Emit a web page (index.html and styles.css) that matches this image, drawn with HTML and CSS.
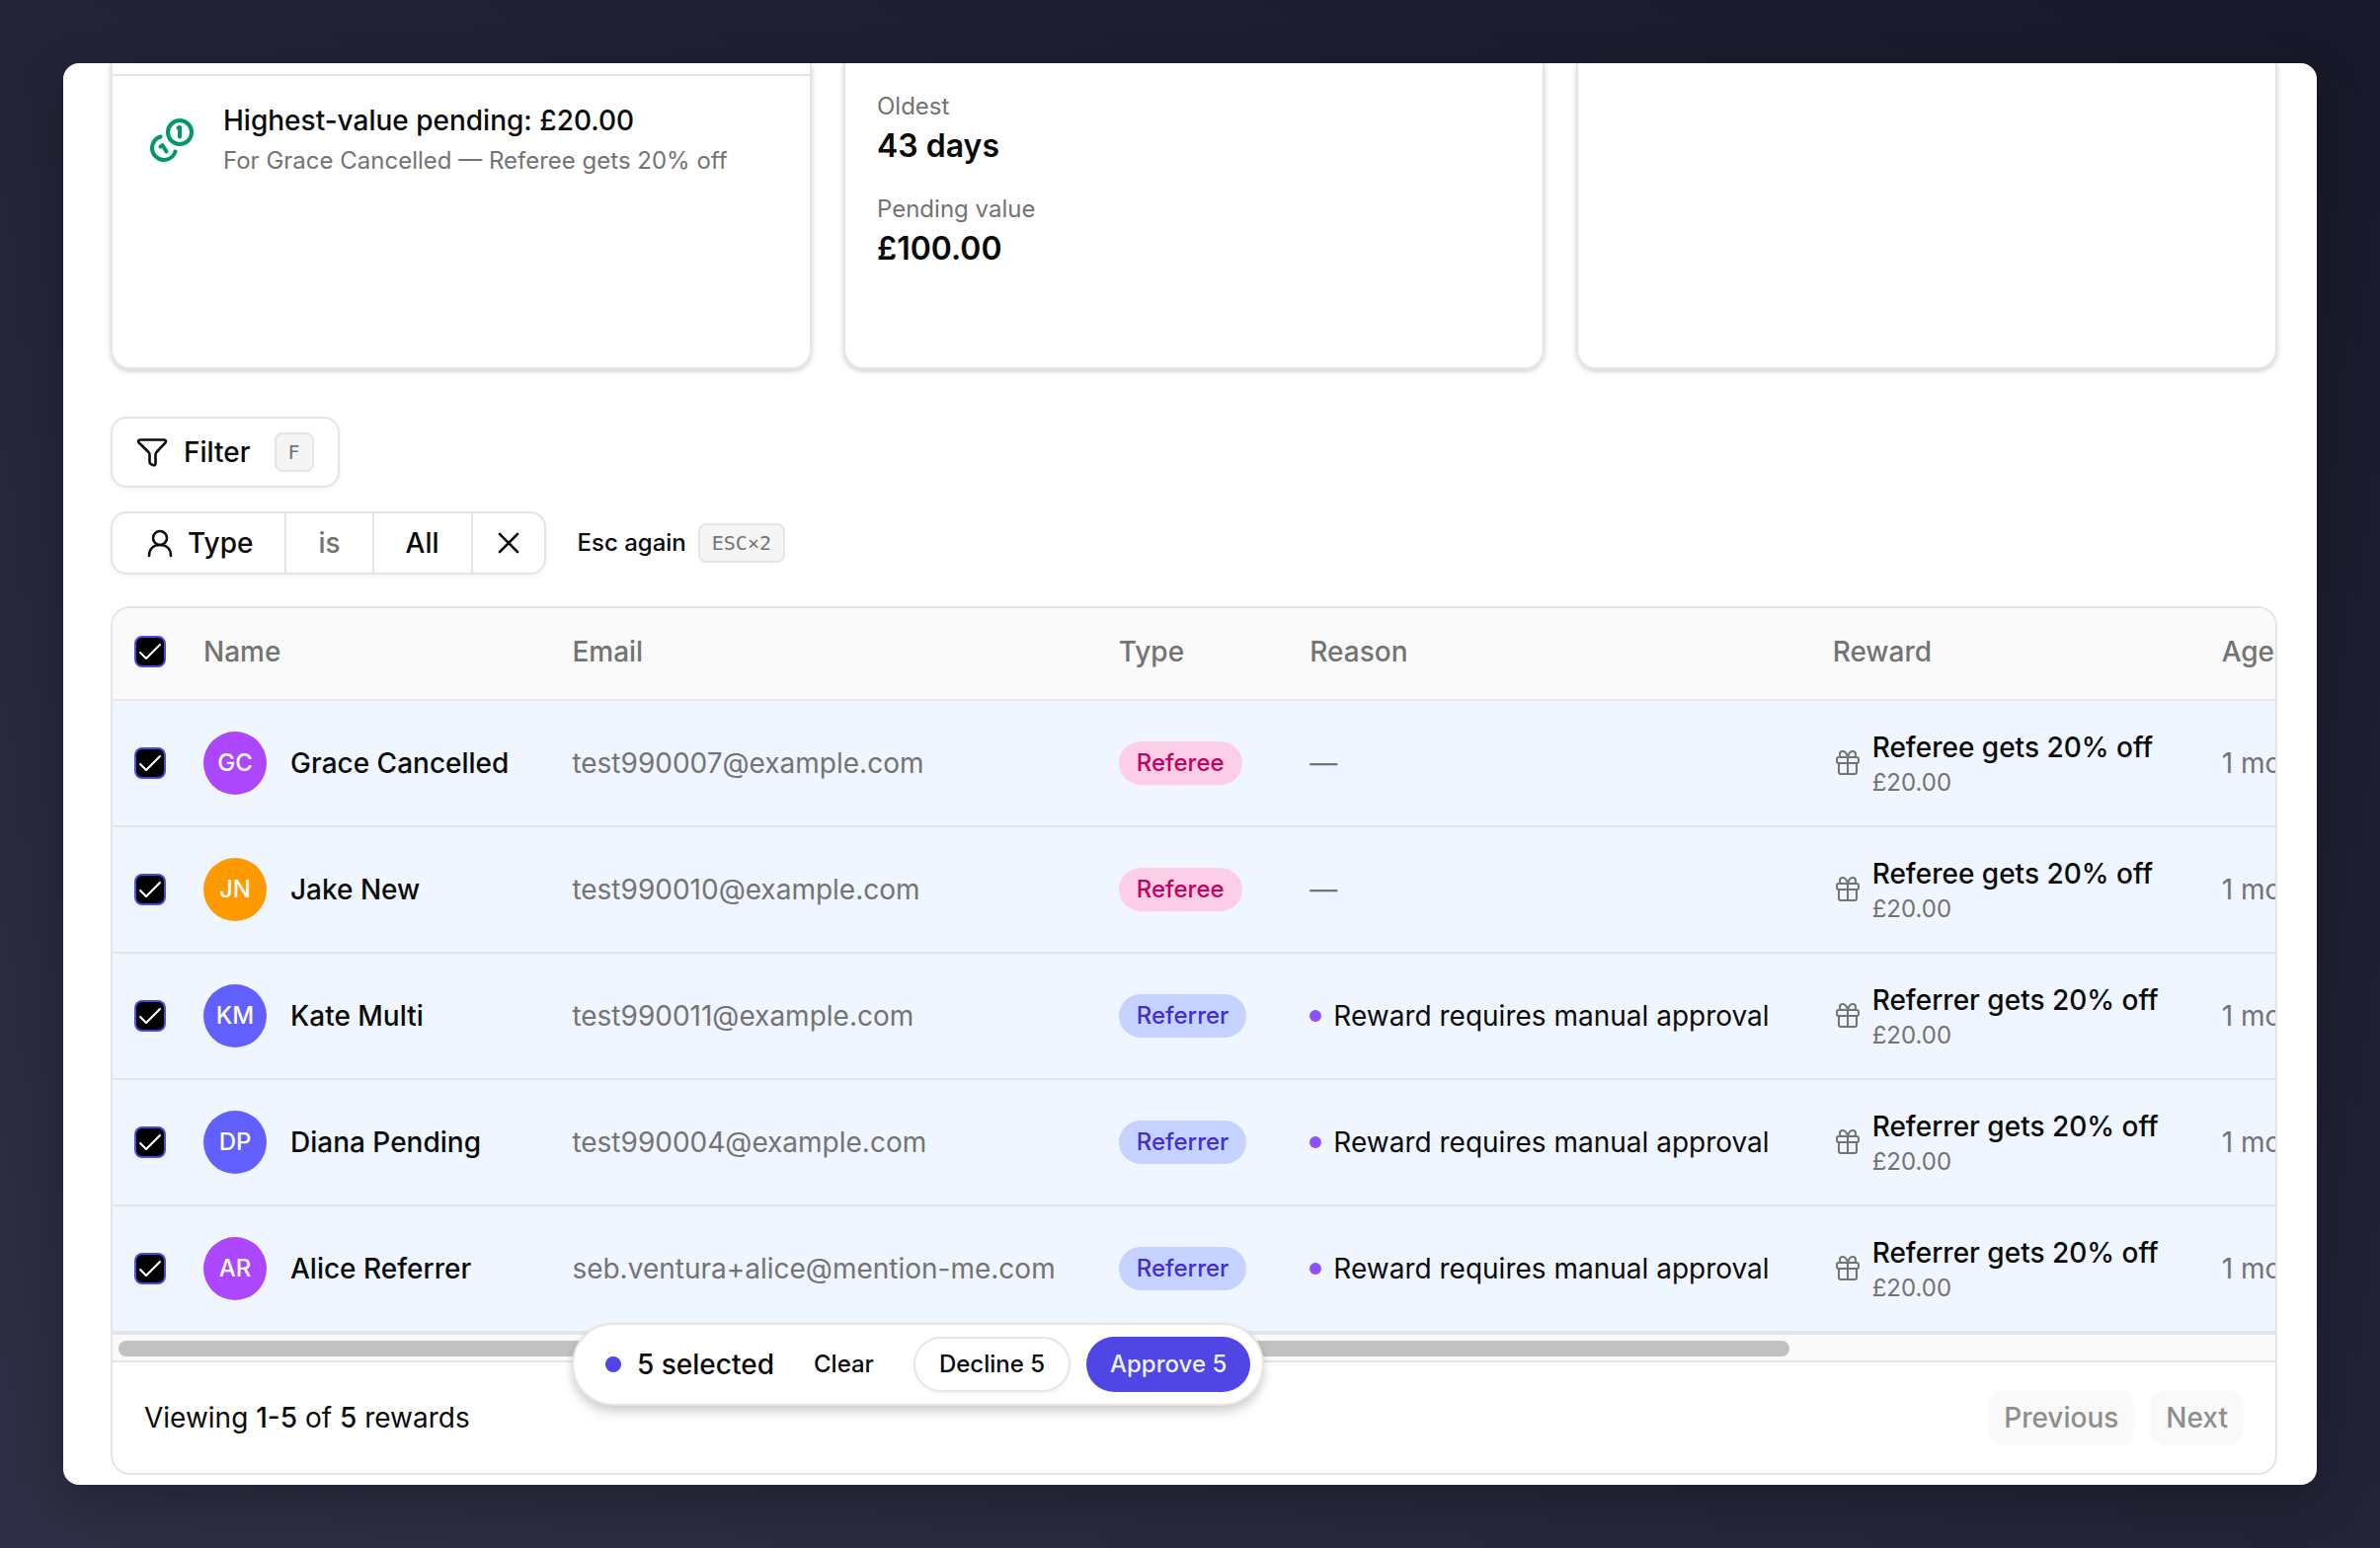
FILE: index.html
```html
<!DOCTYPE html>
<html lang="en">
  <head>
    <meta charset="UTF-8">
    <title>Pending rewards</title>
    <link rel="stylesheet" href="styles.css">
  </head>

  <body>
    <!-- shared icons -->
    <svg class="sprite" aria-hidden="true">
      <symbol id="icon-gift" viewBox="0 0 32 32">
        <rect x="4" y="10" width="22" height="6" rx="2"/>
        <path d="M6 16v9a2 2 0 0 0 2 2h14a2 2 0 0 0 2-2v-9"/>
        <path d="M15 10v17"/>
        <path d="M15 10c-1-4-3-6-5-6a3 3 0 0 0-3 3c0 1 0 2 1 3"/>
        <path d="M15 10c1-4 3-6 5-6a3 3 0 0 1 3 3c0 1 0 2-1 3"/>
      </symbol>
    </svg>

    <main class="panel">
      <section class="cards">
        <div class="card">
          <div class="highlight">
            <svg class="coins" viewBox="0 0 48 48" aria-hidden="true">
              <circle cx="32" cy="17" r="12"/>
              <path d="M12.500 21.500A12 12 0 1 0 27.500 36.500"/>
              <path d="M30.500 12.500l1.500-.5v9.500"/>
              <path d="M12.500 31.500l2-1.500 4 6.500"/>
            </svg>
            <div>
              <div class="title">Highest-value pending: £20.00</div>
              <div class="sub">For Grace Cancelled — Referee gets 20% off</div>
            </div>
          </div>
        </div>
        <div class="card">
          <dl class="stats">
            <div>
              <dt>Oldest</dt>
              <dd>43 days</dd>
            </div>
            <div>
              <dt>Pending value</dt>
              <dd>£100.00</dd>
            </div>
          </dl>
        </div>
        <div class="card"></div>
      </section>

      <section class="filters">
        <button type="button" class="filter-btn">
          <svg class="icon" viewBox="0 0 32 32" aria-hidden="true">
            <path d="M4 3.500h24c2 0 2.500 1.500 1.500 2.800L20.500 16c-.7.800-1 1.500-1 2.500v9c0 2-1.500 2-2.800 1.500l-1.700-.8c-1-.4-1.500-1-1.500-2.200v-7.500c0-1-.3-1.700-1-2.500L2.500 6.300C1.500 5 2 3.500 4 3.500z"/>
          </svg>
          Filter
          <kbd>F</kbd>
        </button>

        <div class="filter-row">
          <div class="chip">
            <button type="button">
              <svg class="icon" viewBox="0 0 32 32" aria-hidden="true">
                <circle cx="16" cy="11" r="7"/>
                <path d="M5 29c0-7 4.500-11 11-11s11 4 11 11"/>
              </svg>
              Type
            </button>
            <button type="button" class="operator">is</button>
            <button type="button">All</button>
            <button type="button" class="remove" aria-label="Remove filter">
              <svg class="icon" viewBox="0 0 32 32" aria-hidden="true">
                <path d="M7 7l18 18M25 7L7 25"/>
              </svg>
            </button>
          </div>
          <div class="hint">Esc again <kbd>ESC×2</kbd></div>
        </div>
      </section>

      <section class="rewards">
        <div class="table-clip">
          <table>
            <thead>
              <tr>
                <th class="check"><input type="checkbox" aria-label="Select all" checked></th>
                <th>Name</th>
                <th>Email</th>
                <th>Type</th>
                <th>Reason</th>
                <th>Reward</th>
                <th>Age</th>
              </tr>
            </thead>
            <tbody>
              <tr>
                <td class="check"><input type="checkbox" aria-label="Select Grace Cancelled" checked></td>
                <td><div class="person"><span class="avatar purple">GC</span>Grace Cancelled</div></td>
                <td class="muted">test990007@example.com</td>
                <td><span class="badge referee">Referee</span></td>
                <td class="muted">—</td>
                <td>
                  <div class="reward">
                    <svg aria-hidden="true"><use href="#icon-gift"/></svg>
                    <div><div class="title">Referee gets 20% off</div><div class="amount">£20.00</div></div>
                  </div>
                </td>
                <td class="muted">1 month</td>
              </tr>
              <tr>
                <td class="check"><input type="checkbox" aria-label="Select Jake New" checked></td>
                <td><div class="person"><span class="avatar amber">JN</span>Jake New</div></td>
                <td class="muted">test990010@example.com</td>
                <td><span class="badge referee">Referee</span></td>
                <td class="muted">—</td>
                <td>
                  <div class="reward">
                    <svg aria-hidden="true"><use href="#icon-gift"/></svg>
                    <div><div class="title">Referee gets 20% off</div><div class="amount">£20.00</div></div>
                  </div>
                </td>
                <td class="muted">1 month</td>
              </tr>
              <tr>
                <td class="check"><input type="checkbox" aria-label="Select Kate Multi" checked></td>
                <td><div class="person"><span class="avatar indigo">KM</span>Kate Multi</div></td>
                <td class="muted">test990011@example.com</td>
                <td><span class="badge referrer">Referrer</span></td>
                <td><div class="reason">Reward requires manual approval</div></td>
                <td>
                  <div class="reward">
                    <svg aria-hidden="true"><use href="#icon-gift"/></svg>
                    <div><div class="title">Referrer gets 20% off</div><div class="amount">£20.00</div></div>
                  </div>
                </td>
                <td class="muted">1 month</td>
              </tr>
              <tr>
                <td class="check"><input type="checkbox" aria-label="Select Diana Pending" checked></td>
                <td><div class="person"><span class="avatar indigo">DP</span>Diana Pending</div></td>
                <td class="muted">test990004@example.com</td>
                <td><span class="badge referrer">Referrer</span></td>
                <td><div class="reason">Reward requires manual approval</div></td>
                <td>
                  <div class="reward">
                    <svg aria-hidden="true"><use href="#icon-gift"/></svg>
                    <div><div class="title">Referrer gets 20% off</div><div class="amount">£20.00</div></div>
                  </div>
                </td>
                <td class="muted">1 month</td>
              </tr>
              <tr>
                <td class="check"><input type="checkbox" aria-label="Select Alice Referrer" checked></td>
                <td><div class="person"><span class="avatar purple">AR</span>Alice Referrer</div></td>
                <td class="muted">seb.ventura+alice@mention-me.com</td>
                <td><span class="badge referrer">Referrer</span></td>
                <td><div class="reason">Reward requires manual approval</div></td>
                <td>
                  <div class="reward">
                    <svg aria-hidden="true"><use href="#icon-gift"/></svg>
                    <div><div class="title">Referrer gets 20% off</div><div class="amount">£20.00</div></div>
                  </div>
                </td>
                <td class="muted">1 month</td>
              </tr>
            </tbody>
          </table>
        </div>
        <div class="scroll-track"><div class="scroll-thumb"></div></div>
        <footer class="table-footer">
          <p>Viewing <strong>1-5</strong> of <strong>5</strong> rewards</p>
          <div class="pager">
            <button type="button" disabled>Previous</button>
            <button type="button" disabled>Next</button>
          </div>
        </footer>
      </section>

      <!-- floats over the table while rows are selected -->
      <div class="bulk-bar">
        <span class="count">5 selected</span>
        <button type="button" class="clear">Clear</button>
        <button type="button" class="decline">Decline 5</button>
        <button type="button" class="approve">Approve 5</button>
      </div>
    </main>
  </body>
</html>
```

FILE: styles.css
```css
* {
  box-sizing: border-box;
}

body {
  margin: 0;
  min-height: 100vh;
  padding: 64px;
  background: linear-gradient(to top right, #2f2f45, #18182a);
  color: #0a0a0a;
  font-family: Inter, sans-serif;
  font-size: 28px;
  line-height: 40px;
}

button {
  font: inherit;
  font-weight: 500;
  color: inherit;
  background: none;
  border: 0;
  padding: 0;
  white-space: nowrap;
}

svg {
  fill: none;
  stroke: currentColor;
  stroke-width: 2;
  stroke-linecap: round;
  stroke-linejoin: round;
  flex-shrink: 0;
}

.sprite {
  display: none;
}

.icon {
  width: 32px;
  height: 32px;
  stroke-width: 2.6;
}

.panel {
  position: relative;
  overflow: hidden;
  padding: 0 40px 10px 48px;
  border-radius: 16px;
  background: white;
  box-shadow: 0 16px 48px rgba(0, 0, 0, .25);
}

.title {
  font-weight: 500;
}

/* summary cards */

.cards {
  display: grid;
  grid-template-columns: repeat(3, 1fr);
  gap: 32px;
}

.card {
  min-height: 310px;
  border: 2px solid #e5e5e5;
  border-top: 0;
  border-radius: 0 0 20px 20px;
  box-shadow: 0 2px 6px rgba(0, 0, 0, .1), 0 2px 4px rgba(0, 0, 0, .1);
}

.highlight {
  display: flex;
  align-items: center;
  gap: 28px;
  margin-top: 11px;
  padding: 25px 36px;
  border-top: 2px solid #e5e5e5;
}

.highlight .sub {
  margin-top: 5px;
  color: #737373;
  font-size: 24px;
  line-height: 32px;
}

.coins {
  width: 48px;
  height: 48px;
  color: #009966;
  stroke-width: 4;
}

.stats {
  display: flex;
  flex-direction: column;
  gap: 24px;
  margin: 0;
  padding: 28px 32px;
}

.stats dt {
  color: #737373;
  font-size: 24px;
  line-height: 32px;
}

.stats dd {
  margin: 0;
  font-size: 32px;
  font-weight: 600;
  line-height: 48px;
}

/* filters */

.filters {
  display: flex;
  flex-direction: column;
  align-items: flex-start;
  gap: 24px;
  margin: 48px 0 32px;
}

.filter-btn {
  display: flex;
  align-items: center;
  gap: 16px;
  height: 72px;
  padding: 0 24px;
  border: 2px solid #e5e5e5;
  border-radius: 16px;
  box-shadow: 0 2px 4px rgba(0, 0, 0, .05);
}

.filter-btn kbd {
  margin-left: 8px;
}

kbd {
  padding: 0 12px;
  border: 2px solid #e5e5e5;
  border-radius: 8px;
  background: #f5f5f5;
  color: #737373;
  font-family: "DejaVu Sans Mono", monospace;
  font-size: 20px;
  font-weight: 400;
  line-height: 36px;
}

.filter-row {
  display: flex;
  align-items: center;
  gap: 32px;
}

.chip {
  display: flex;
  height: 64px;
  border: 2px solid #e5e5e5;
  border-radius: 16px;
  box-shadow: 0 2px 4px rgba(0, 0, 0, .05);
}

.chip button {
  display: flex;
  align-items: center;
  gap: 12px;
  padding: 0 32px;
}

.chip button + button {
  border-left: 2px solid #e5e5e5;
}

.chip .operator {
  color: #737373;
}

.chip .remove {
  padding: 0 20px;
}

.hint {
  display: flex;
  align-items: center;
  gap: 12px;
  font-size: 24px;
  font-weight: 500;
}

/* rewards table */

.rewards {
  overflow: hidden;
  border: 2px solid #e5e5e5;
  border-radius: 20px;
}

.table-clip {
  overflow: hidden;
}

table {
  min-width: 100%;
  border-collapse: separate;
  border-spacing: 0;
  white-space: nowrap;
}

th,
td {
  padding: 0 32px;
  border-bottom: 2px solid #e5e5e5;
  text-align: left;
  vertical-align: middle;
}

th {
  height: 94px;
  padding-bottom: 4px;
  background: #fafafa;
  color: #737373;
  font-weight: 500;
}

td {
  height: 128px;
  background: #eff6ff;
}

.check {
  padding-left: 22px;
  padding-right: 6px;
}

.check input {
  display: block;
  appearance: none;
  width: 32px;
  height: 32px;
  margin: 0;
  border: 2px solid #4f46e5;
  border-radius: 8px;
  background: black url("data:image/svg+xml,%3Csvg xmlns='http://www.w3.org/2000/svg' viewBox='0 0 28 28' fill='none' stroke='white' stroke-width='2' stroke-linecap='round' stroke-linejoin='round'%3E%3Cpath d='M4 15l6 6L24 7'/%3E%3C/svg%3E") center / 28px 28px no-repeat;
}

.muted {
  color: #737373;
}

.person {
  display: flex;
  align-items: center;
  gap: 24px;
  font-weight: 500;
}

.avatar {
  width: 64px;
  height: 64px;
  border-radius: 50%;
  color: white;
  font-size: 24px;
  line-height: 64px;
  text-align: center;
}

.purple {
  background: #ad46ff;
}

.amber {
  background: #fe9a00;
}

.indigo {
  background: #615fff;
}

.badge {
  display: block;
  width: max-content;
  padding: 0 18px;
  border-radius: 22px;
  font-size: 24px;
  font-weight: 500;
  line-height: 44px;
}

.referee {
  background: #fccee8;
  color: #c6005c;
}

.referrer {
  background: #c6d2ff;
  color: #432dd7;
}

.reason {
  display: flex;
  align-items: center;
  gap: 12px;
}

.reason::before {
  content: "";
  width: 12px;
  height: 12px;
  border-radius: 50%;
  background: #8e51ff;
}

.reward {
  display: flex;
  align-items: center;
  gap: 8px;
}

.reward svg {
  width: 32px;
  height: 32px;
  color: #737373;
}

.reward .amount {
  color: #737373;
  font-size: 24px;
  line-height: 32px;
}

.scroll-track {
  padding: 6px 6px 4px;
  border-top: 2px solid #e5e5e5;
  border-bottom: 2px solid #e5e5e5;
  background: #fafafa;
}

.scroll-thumb {
  width: 77.7%;
  height: 16px;
  border-radius: 8px;
  background: #c1c1c1;
}

.table-footer {
  display: flex;
  align-items: center;
  justify-content: space-between;
  padding: 28px 32px;
}

.table-footer p {
  margin: 0;
}

.table-footer strong {
  font-weight: 500;
}

.pager {
  display: flex;
  gap: 16px;
}

.pager button {
  height: 56px;
  padding: 0 16px;
  border-radius: 16px;
  background: #f9f9f9;
  color: #8e8e8e;
}

/* bulk actions */

.bulk-bar {
  position: absolute;
  left: 515px;
  bottom: 80px;
  display: flex;
  align-items: center;
  gap: 16px;
  padding: 12px 12px 12px 32px;
  border: 2px solid #e5e5e5;
  border-radius: 42px;
  background: white;
  box-shadow: 0 8px 12px rgba(0, 0, 0, .1), 0 4px 8px rgba(0, 0, 0, .1);
}

.count {
  display: flex;
  align-items: center;
  gap: 16px;
  font-weight: 500;
}

.count::before {
  content: "";
  width: 16px;
  height: 16px;
  border-radius: 50%;
  background: #4f46e5;
}

.bulk-bar button {
  height: 56px;
  padding: 0 24px;
  border-radius: 28px;
  font-size: 24px;
}

.bulk-bar .decline {
  border: 2px solid #e5e5e5;
  box-shadow: 0 2px 4px rgba(0, 0, 0, .05);
}

.bulk-bar .approve {
  background: #4f46e5;
  color: #eef2ff;
}
```
